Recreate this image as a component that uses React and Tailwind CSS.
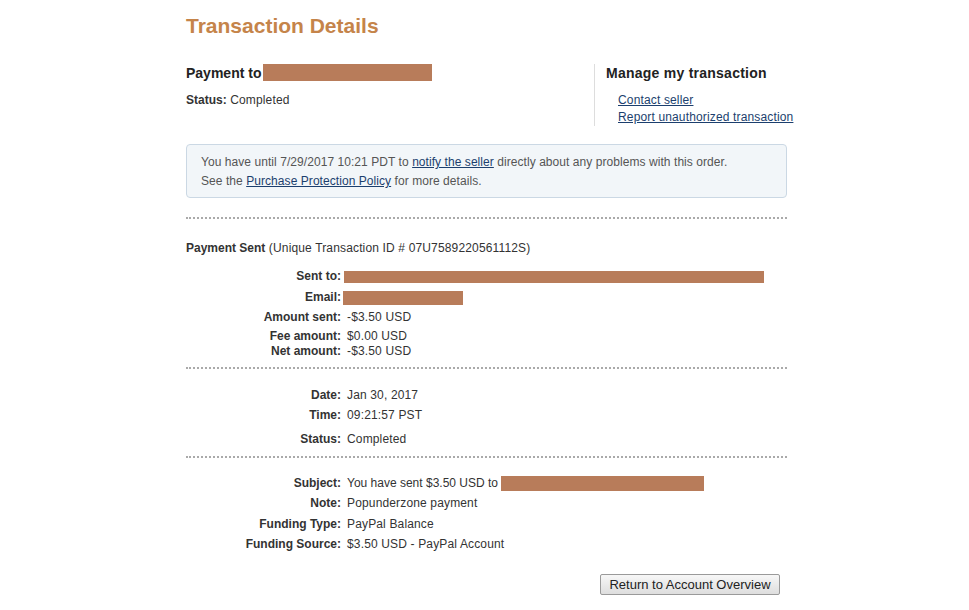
import React from 'react'

const redact = 'inline-block bg-[#b87c5a] align-middle'

function Row({ label, children, className = '' }) {
  return (
    <div className={`flex leading-[15px] ${className}`}>
      <div className="w-[155px] shrink-0 text-right font-bold tracking-normal text-[#333]">{label}</div>
      <div className="pl-[6px] text-[#333]">{children}</div>
    </div>
  )
}

function Dots({ className = '' }) {
  return <div className={`border-t-2 border-dotted border-[#aaaaaa] ${className}`} />
}

export default function App() {
  return (
    <div className="min-h-[610px] bg-white font-['Liberation_Sans',Arial,sans-serif] text-[12px] tracking-[0.15px] text-[#333]">
      <div className="ml-[186px] w-[601px] pt-[14px]">
        <h1 className="text-[21px] font-bold leading-6 tracking-normal text-[#c5844a]">Transaction Details</h1>

        {/* header summary + manage links */}
        <div className="mt-[26px] flex">
          <div className="flex-1">
            <div className="flex h-[17px] items-center pt-[1px] text-[14px] font-bold tracking-normal text-[#222]">
              Payment to<span className="ml-[2px] -mt-[1px] inline-block h-[17px] w-[169px] bg-[#b87c5a]" />
            </div>
            <p className="mt-[12px] leading-[15px]">
              <span className="font-bold tracking-normal">Status:</span> Completed
            </p>
          </div>
          <div className="w-[193px] shrink-0 whitespace-nowrap border-l border-[#dddddd] pl-[11px]">
            <div className="h-[17px] pt-[1px] text-[14px] font-bold leading-[17px] tracking-[0.25px] text-[#222]">
              Manage my transaction
            </div>
            <ul className="mt-[10px] pl-3 leading-[17px]">
              <li className="pt-[1px]">
                <a href="#" className="text-[#1c3f6e] underline">Contact seller</a>
              </li>
              <li>
                <a href="#" className="text-[#1c3f6e] underline">Report unauthorized transaction</a>
              </li>
            </ul>
          </div>
        </div>

        <div className="mt-[18px] rounded-[4px] border border-[#cbd8e4] bg-[#f2f6f9] px-[14px] py-[7px] leading-[19px] tracking-[0.06px] text-[#555]">
          <p className="pt-[1px]">
            You have until 7/29/2017 10:21 PDT to{' '}
            <a href="#" className="text-[#1c3f6e] underline">notify the seller</a> directly about any problems with this order.
          </p>
          <p className="-mb-[1px]">
            See the <a href="#" className="text-[#1c3f6e] underline">Purchase Protection Policy</a> for more details.
          </p>
        </div>

        <Dots className="mt-[19px]" />

        <p className="mt-[22px] leading-[15px]">
          <span className="font-bold tracking-normal">Payment Sent</span> (Unique Transaction ID # 07U7589220561112S)
        </p>

        <Row label="Sent to:" className="mt-[13px]">
          <span className={`${redact} -ml-[3px] h-[12px] w-[420px]`} />
        </Row>
        <Row label="Email:" className="mt-[6px]">
          <span className={`${redact} -ml-[4px] h-[14px] w-[120px]`} />
        </Row>
        <Row label="Amount sent:" className="mt-[5px]">-$3.50 USD</Row>
        <Row label="Fee amount:" className="mt-[4px]">$0.00 USD</Row>
        <Row label="Net amount:">-$3.50 USD</Row>

        <Dots className="mt-[8px]" />

        <Row label="Date:" className="mt-[19px]">Jan 30, 2017</Row>
        <Row label="Time:" className="mt-[5px]">09:21:57 PST</Row>
        <Row label="Status:" className="mt-[9px]">Completed</Row>

        <Dots className="mt-[9px]" />

        <Row label="Subject:" className="mt-[18px]">
          <span className="tracking-normal">
            You have sent $3.50 USD to <span className={`${redact} -mt-[1px] h-[15px] w-[203px]`} />
          </span>
        </Row>
        <Row label="Note:" className="mt-[5px]">Popunderzone payment</Row>
        <Row label="Funding Type:" className="mt-[6px]">PayPal Balance</Row>
        <Row label="Funding Source:" className="mt-[5px]">$3.50 USD - PayPal Account</Row>

        <div className="mt-[22px] flex justify-end pr-[7px]">
          <button
            type="button"
            className="h-[21px] w-[180px] rounded-[2px] border border-[#9a9a9a] bg-gradient-to-b from-[#f7f7f7] to-[#dedede] text-[13px] leading-[19px] tracking-normal text-[#222]"
          >
            Return to Account Overview
          </button>
        </div>
      </div>
    </div>
  )
}
